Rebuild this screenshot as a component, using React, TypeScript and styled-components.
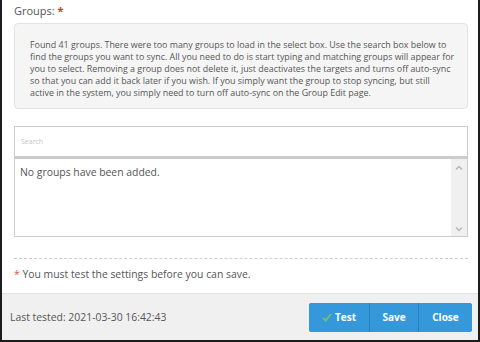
import React from "react"
import styled, { createGlobalStyle } from "styled-components"

const GlobalStyle = createGlobalStyle`
  html, body {
    margin: 0;
    padding: 0;
    background: #ffffff;
  }
  body {
    font-family: "Open Sans", "DejaVu Sans", sans-serif;
    color: #555555;
  }
`

const Frame = styled.div`
  width: 480px;
  height: 342px;
  box-sizing: border-box;
  border: 2px solid #1c1c1c;
  border-top: none;
  display: flex;
  flex-direction: column;
  background: #ffffff;
`

const Body = styled.div`
  flex: 1;
  padding: 3px 10px 0 12px;
  display: flex;
  flex-direction: column;
`

const Label = styled.div`
  font-size: 11px;
  line-height: 16px;
  color: #555;
  margin-bottom: 4px;
`

const Required = styled.span`
  color: #d9362b;
  font-weight: 700;
`

const InfoWell = styled.div`
  background: #f5f5f5;
  border: 1px solid #e3e3e3;
  border-radius: 4px;
  height: 86px;
  box-sizing: border-box;
  padding: 15px 14px 0 15px;
  font-size: 8.9px;
  line-height: 12px;
  color: #555;
  white-space: nowrap;
`

const Picker = styled.div`
  margin-top: 17px;
  display: flex;
  flex-direction: column;
`

const SearchInput = styled.input`
  height: 31px;
  box-sizing: border-box;
  border: 1px solid #cccccc;
  padding: 0 6px;
  font-family: "Open Sans", sans-serif;
  font-size: 7px;
  outline: none;
  &::placeholder {
    color: #c4c4c4;
  }
`

const ListBox = styled.div`
  height: 80px;
  box-sizing: border-box;
  border: 1px solid #cccccc;
  border-top-width: 2px;
  display: flex;
`

const ListContent = styled.div`
  flex: 1;
  padding: 6px 5px;
  font-size: 10.4px;
  line-height: 14px;
  color: #555;
`

const ScrollTrack = styled.div`
  width: 16px;
  background: #f0f0f0;
  display: flex;
  flex-direction: column;
  justify-content: space-between;
  align-items: center;
  padding: 6px 0 4px;
  color: #b5b5b5;
`

const Divider = styled.div`
  margin-top: 21px;
  border-top: 1px dashed #cfcfcf;
`

const Note = styled.div`
  margin-top: 8px;
  font-size: 10.4px;
  line-height: 14px;
  color: #555;
`

const NoteStar = styled.span`
  color: #e0503c;
`

const Footer = styled.div`
  height: 46px;
  background: #f0f0f0;
  border-top: 1px solid #e2e2e2;
  display: flex;
  align-items: center;
  justify-content: space-between;
  padding: 0 6px 0 8px;
`

const Stamp = styled.div`
  font-size: 10.4px;
  color: #555;
`

const ButtonGroup = styled.div`
  display: flex;
  height: 29px;
  border-radius: 3px;
  overflow: hidden;
  background: #3598db;
  box-shadow: 0 0 0 1px #2f8acb inset;
`

const Button = styled.button<{ $w: number }>`
  width: ${p => p.$w}px;
  height: 100%;
  border: none;
  background: #3598db;
  color: #ffffff;
  font-family: "Open Sans", sans-serif;
  font-weight: 700;
  font-size: 10px;
  display: flex;
  align-items: center;
  justify-content: center;
  gap: 3px;
  padding: 0;
  & + & {
    border-left: 1px solid #2a7fbd;
  }
`

const Chevron = ({ up }: { up?: boolean }) => (
  <svg width="8" height="5" viewBox="0 0 8 5">
    <path
      d={up ? "M1 4.5 L4 1.5 L7 4.5" : "M1 0.5 L4 3.5 L7 0.5"}
      fill="none"
      stroke="currentColor"
      strokeWidth="1.3"
    />
  </svg>
)

const Check = () => (
  <svg width="10" height="9" viewBox="0 0 10 9">
    <path d="M1 5 L3.8 7.6 L9 1" fill="none" stroke="#6cc070" strokeWidth="2" />
  </svg>
)

const App = () => {
  return (
    <>
      <GlobalStyle />
      <Frame>
        <Body>
          <Label>
            Groups: <Required>*</Required>
          </Label>
          <InfoWell>
            Found 41 groups. There were too many groups to load in the select box. Use the search box below to
            <br />
            find the groups you want to sync. All you need to do is start typing and matching groups will appear for
            <br />
            you to select. Removing a group does not delete it, just deactivates the targets and turns off auto-sync
            <br />
            so that you can add it back later if you wish. If you simply want the group to stop syncing, but still
            <br />
            active in the system, you simply need to turn off auto-sync on the Group Edit page.
          </InfoWell>
          <Picker>
            <SearchInput placeholder="Search" />
            <ListBox>
              <ListContent>No groups have been added.</ListContent>
              <ScrollTrack>
                <Chevron up />
                <Chevron />
              </ScrollTrack>
            </ListBox>
          </Picker>
          <Divider />
          <Note>
            <NoteStar>*</NoteStar> You must test the settings before you can save.
          </Note>
        </Body>
        <Footer>
          <Stamp>Last tested: 2021-03-30 16:42:43</Stamp>
          <ButtonGroup>
            <Button $w={60}>
              <Check />
              Test
            </Button>
            <Button $w={49}>Save</Button>
            <Button $w={54}>Close</Button>
          </ButtonGroup>
        </Footer>
      </Frame>
    </>
  )
}

export default App
